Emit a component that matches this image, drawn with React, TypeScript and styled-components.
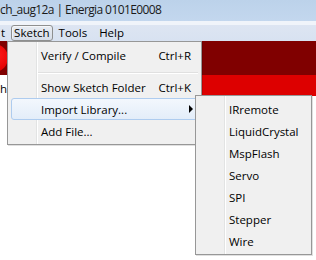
import React from 'react'
import styled, { createGlobalStyle } from 'styled-components'

const GlobalStyle = createGlobalStyle`
  html, body {
    margin: 0;
    padding: 0;
    background: #ffffff;
    overflow: hidden;
  }
  body {
    font-family: "Open Sans", "Noto Sans", sans-serif;
  }
`

const libraries = ['IRremote', 'LiquidCrystal', 'MspFlash', 'Servo', 'SPI', 'Stepper', 'Wire']

const App: React.FC = () => {
  return (
    <Window>
      <GlobalStyle />
      <TitleBar>ch_aug12a | Energia 0101E0008</TitleBar>
      <MenuBar>
        <MenuTitle first>t</MenuTitle>
        <MenuTitle open>Sketch</MenuTitle>
        <MenuTitle>Tools</MenuTitle>
        <MenuTitle>Help</MenuTitle>
      </MenuBar>
      <Body>
        <Toolbar>
          <RoundButton />
        </Toolbar>
        <TabBar>
          <Tab>h</Tab>
        </TabBar>
        <Editor />

        <Dropdown>
          <Item>
            <Label>Verify / Compile</Label>
            <Shortcut>Ctrl+R</Shortcut>
          </Item>
          <Separator />
          <Item>
            <Label>Show Sketch Folder</Label>
            <Shortcut>Ctrl+K</Shortcut>
          </Item>
          <Item active>
            <Label>Import Library...</Label>
            <Arrow />
          </Item>
          <Item>
            <Label>Add File...</Label>
          </Item>
        </Dropdown>

        <Submenu>
          {libraries.map((lib) => (
            <Item key={lib}>
              <Label>{lib}</Label>
            </Item>
          ))}
        </Submenu>
      </Body>
    </Window>
  )
}

export default App

const Window = styled.div`
  width: 316px;
  height: 260px;
  display: flex;
  flex-direction: column;
  overflow: hidden;
  color: #000;
  font-size: 11.5px;
`

const TitleBar = styled.div`
  height: 21px;
  flex: none;
  box-sizing: border-box;
  padding-top: 1px;
  line-height: 18px;
  font-size: 12px;
  letter-spacing: -0.6px;
  color: #1a1a1a;
  white-space: nowrap;
  background: linear-gradient(#bcd2ea, #c3d7ee);
`

const MenuBar = styled.div`
  height: 20px;
  flex: none;
  box-sizing: border-box;
  display: flex;
  align-items: flex-end;
  background: linear-gradient(#f0f4fa 0px, #f0f4fa 4px, #dde5f2 4px, #d8e2f1 100%);
`

const MenuTitle = styled.div<{ open?: boolean; first?: boolean }>`
  height: 16px;
  box-sizing: border-box;
  line-height: 14px;
  padding: 0 ${({ open }) => (open ? '2px' : '5px')};
  margin-left: ${({ first }) => (first ? '-5px' : '0')};
  border: 1px solid ${({ open }) => (open ? '#8e8f8f' : 'transparent')};
  border-radius: 3px;
  background: ${({ open }) => (open ? 'linear-gradient(#e8ecf2, #d6dde8)' : 'transparent')};
  box-shadow: ${({ open }) => (open ? 'inset 1px 1px 0 rgba(255,255,255,0.6)' : 'none')};
`

const Body = styled.div`
  position: relative;
  flex: 1;
  display: flex;
  flex-direction: column;
`

const Toolbar = styled.div`
  height: 34px;
  flex: none;
  background: #800000;
  display: flex;
  align-items: center;
  overflow: hidden;
`

const RoundButton = styled.div`
  width: 28px;
  height: 28px;
  flex: none;
  margin-left: -20px;
  border-radius: 50%;
  background: radial-gradient(circle at 60% 40%, #ff1a1a, #e00000 70%, #a00000);
`

const TabBar = styled.div`
  height: 21px;
  flex: none;
  background: #dd0000;
  display: flex;
`

const Tab = styled.div`
  width: 8px;
  display: flex;
  align-items: flex-end;
  line-height: 12px;
  padding-bottom: 1px;
  box-sizing: border-box;
  background: #ffffff;
`

const Editor = styled.div`
  flex: 1;
  background: #ffffff;
`

const MenuPanel = styled.div`
  position: absolute;
  box-sizing: border-box;
  border: 1px solid #979797;
  padding: 2px 3px;
  box-shadow: 1px 1px 0 rgba(0, 0, 0, 0.12);
  background:
    linear-gradient(to right, transparent 28px, #e2e3e3 28px, #e2e3e3 29px, #ffffff 29px, #ffffff 30px, transparent 30px),
    #f0f0f0;
`

const Dropdown = styled(MenuPanel)`
  left: 7px;
  top: 0;
  width: 195px;
`

const Submenu = styled(MenuPanel)`
  left: 195px;
  top: 54px;
  width: 117px;
`

const Item = styled.div<{ active?: boolean }>`
  position: relative;
  height: 22px;
  box-sizing: border-box;
  display: flex;
  align-items: center;
  padding: 0 6px 0 30px;
  border: 1px solid ${({ active }) => (active ? '#aeccef' : 'transparent')};
  border-radius: 3px;
  background: ${({ active }) => (active ? 'linear-gradient(#f3f7fd, #e3edf9)' : 'transparent')};
  white-space: nowrap;
`

const Label = styled.span`
  flex: 1;
  margin-left: -1px;
`

const Shortcut = styled.span`
  flex: none;
`

const Arrow = styled.span`
  width: 0;
  height: 0;
  margin-right: -2px;
  border-top: 4px solid transparent;
  border-bottom: 4px solid transparent;
  border-left: 4px solid #000;
`

const Separator = styled.div`
  height: 10px;
  box-sizing: border-box;
  margin-left: 27px;
  padding-top: 6px;
  &::after {
    content: '';
    display: block;
    height: 1px;
    background: #e0e0e0;
    border-bottom: 1px solid #ffffff;
  }
`
